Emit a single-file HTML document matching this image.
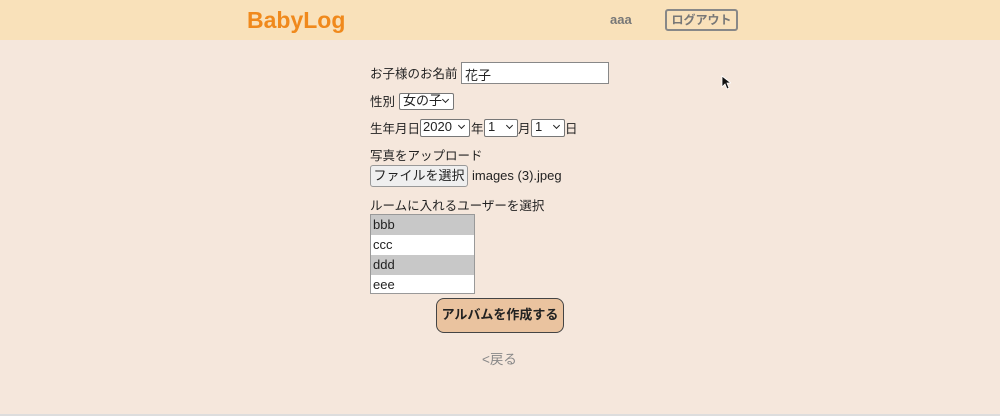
<!DOCTYPE html>
<html><head><meta charset="utf-8"><style>
body{margin:0;width:1000px;height:416px;background:#f5e7dc;font-family:"Liberation Sans","Noto Sans CJK JP",sans-serif;font-size:12.5px;color:#222;position:relative;overflow:hidden}
.a{position:absolute;white-space:nowrap}
.hdr{position:absolute;left:0;top:0;width:1000px;height:40px;background:#f9e1ba}
.box{position:absolute;background:#fff;border:1px solid #888;box-sizing:border-box}
.sel{position:absolute;background:#fff;border:1px solid #777;border-radius:2px;box-sizing:border-box;font-size:13px;line-height:14px;padding-left:3px}
.sel:after{content:"";position:absolute;right:5px;top:3px;width:4px;height:4px;border-right:1.5px solid #222;border-bottom:1.5px solid #222;transform:rotate(45deg)}
</style></head><body>
<div class="hdr"></div>
<div class="a" style="left:247px;top:7px;font-size:23px;font-weight:bold;color:#f0891c">BabyLog</div>
<div class="a" style="left:610px;top:12px;font-size:13px;font-weight:bold;color:#777">aaa</div>
<div class="a" style="left:665px;top:9px;width:73px;height:22px;border:2px solid #888;border-radius:3px;box-sizing:border-box;color:#777;font-weight:bold;font-size:12px;text-align:center;line-height:18px">ログアウト</div>
<svg class="a" style="left:721px;top:75px" width="10" height="15"><path d="M1 1 L1 12 L4 9 L6 14 L8 13 L6 8 L10 8 Z" fill="#111" stroke="#fff" stroke-width="0.8"/></svg>

<div class="a" style="left:370px;top:63px">お子様のお名前</div>
<div class="box" style="left:461px;top:62px;width:148px;height:22px;padding:2px 3px;font-size:13px">花子</div>
<div class="a" style="left:370px;top:91px">性別</div>
<div class="sel" style="left:399px;top:93px;width:55px;height:17px">女の子</div>
<div class="a" style="left:370px;top:118px">生年月日</div>
<div class="sel" style="left:420px;top:119px;width:50px;height:18px;padding-left:2px">2020</div>
<div class="a" style="left:471px;top:118px">年</div>
<div class="sel" style="left:484px;top:119px;width:34px;height:18px">1</div>
<div class="a" style="left:518px;top:118px">月</div>
<div class="sel" style="left:531px;top:119px;width:34px;height:18px">1</div>
<div class="a" style="left:565px;top:118px">日</div>
<div class="a" style="left:370px;top:145px">写真をアップロード</div>
<div class="a" style="left:370px;top:165px;width:98px;height:22px;background:#efefef;border:1px solid #999;border-radius:3px;box-sizing:border-box;text-align:center;line-height:20px;font-size:13px">ファイルを選択</div>
<div class="a" style="left:472px;top:168px;font-size:13px">images (3).jpeg</div>
<div class="a" style="left:370px;top:195px">ルームに入れるユーザーを選択</div>
<div class="box" style="left:370px;top:214px;width:105px;height:80px;border-color:#999;font-size:13px">
<div style="height:20px;background:#c8c8c8;line-height:20px;padding-left:2px">bbb</div>
<div style="height:20px;line-height:20px;padding-left:2px">ccc</div>
<div style="height:20px;background:#c8c8c8;line-height:20px;padding-left:2px">ddd</div>
<div style="height:19px;line-height:19px;padding-left:2px">eee</div>
</div>
<div class="a" style="left:436px;top:298px;width:128px;height:35px;background:#eac39f;border:1px solid #444;border-radius:8px;box-sizing:border-box;text-align:center;line-height:32px;font-weight:bold;font-size:13px">アルバムを作成する</div>
<div class="a" style="left:482px;top:348px;color:#888;font-size:13.5px">&lt;戻る</div>
<div class="a" style="left:0;top:414px;width:1000px;height:2px;background:#ddd"></div>
</body></html>
